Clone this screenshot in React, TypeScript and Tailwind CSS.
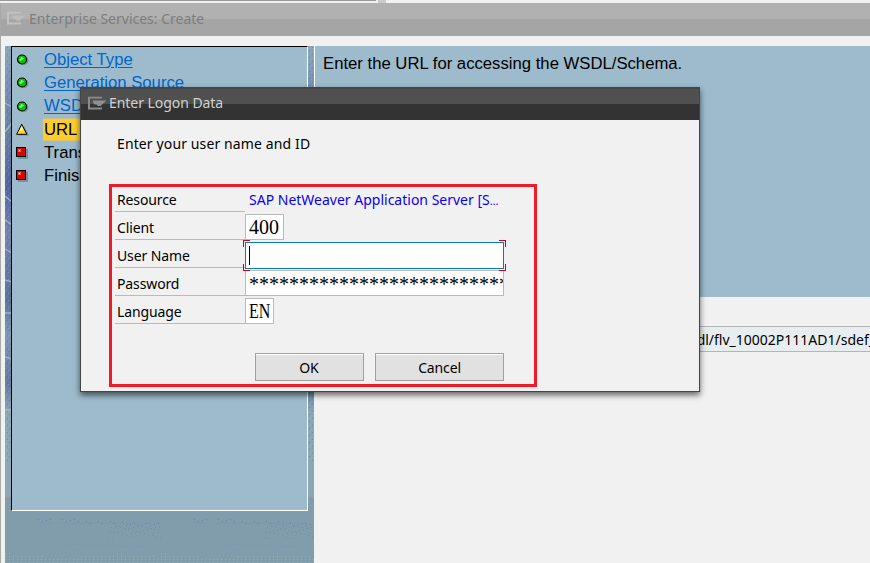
import React from 'react';

const ui = "font-['Noto_Sans',sans-serif]";
const arial = "font-['Liberation_Sans',Arial,sans-serif]";

function WindowGlyph({ stroke, fill }: { stroke: string; fill: string }) {
  return (
    <svg width="20" height="14" viewBox="0 0 20 14" className="shrink-0 -translate-y-[1.5px]">
      <path d="M14 1H1V12H14" fill="none" stroke={stroke} strokeWidth="2" />
      <path d="M5 4H18.5L12.5 9.5H10L8.5 8H6.5L5 6Z" fill={fill} />
    </svg>
  );
}

type StepState = 'done' | 'current' | 'todo';

function StepIcon({ state }: { state: StepState }) {
  return (
    <svg width="13" height="13" viewBox="0 0 13 13" className="shrink-0">
      {state === 'done' && (
        <>
          <circle cx="7.8" cy="7.5" r="4.7" fill="#6f93a5" />
          <circle cx="6" cy="6.5" r="4.5" fill="#00c800" stroke="#000" strokeWidth="1.2" />
          <path d="M3 7L6 4L8 5.5L4.5 8Z" fill="#8bff7a" />
          <path d="M5 4.5h1v1h-1z" fill="#fff" />
        </>
      )}
      {state === 'current' && (
        <>
          <path d="M8 3L13 12.5H3Z" fill="#6f93a5" />
          <path d="M5.7 1.2L10.8 11.3H0.6Z" fill="#ffd52c" stroke="#000" strokeWidth="1" />
          <path d="M5.5 3.5L7.5 7.5H3.7Z" fill="#fff8b0" />
        </>
      )}
      {state === 'todo' && (
        <g shapeRendering="crispEdges">
          <path d="M2 3H12V13H2Z" fill="#6f93a5" />
          <path d="M0 1H10V11H0Z" fill="#000" />
          <path d="M1 2H9V10H1Z" fill="#e00000" />
          <path d="M2 3H5V6H2Z" fill="#ff6060" />
          <path d="M3 4H4V5H3Z" fill="#fff" />
        </g>
      )}
    </svg>
  );
}

const steps: { label: string; state: StepState }[] = [
  { label: 'Object Type', state: 'done' },
  { label: 'Generation Source', state: 'done' },
  { label: 'WSDL', state: 'done' },
  { label: 'URL', state: 'current' },
  { label: 'Transport', state: 'todo' },
  { label: 'Finish', state: 'todo' },
];

function Steps() {
  return (
    <ul className="flex flex-col pt-[1px]">
      {steps.map((s) => (
        <li key={s.label} className="flex h-[23.25px] items-center pl-[4px]">
          <StepIcon state={s.state} />
          <span
            className={`ml-[14px] pl-[1px] pr-[3px] text-[16.7px] leading-[22px] whitespace-nowrap ${
              s.state === 'done'
                ? 'text-[#0066cc] underline decoration-1 underline-offset-2'
                : s.state === 'current'
                  ? 'translate-y-[0.6px] bg-[#ffcb2f] text-black'
                  : 'text-black'
            }`}
          >
            {s.label}
          </span>
        </li>
      ))}
    </ul>
  );
}

function WaterTexture() {
  const dots: React.ReactElement[] = [];
  for (let i = 0; i < 62; i++) {
    const x = 33 + i * 2;
    if (i > 7 && i < 11) continue;
    if (i % 2 === 0) {
      dots.push(<rect key={`a${i}`} x={x} y={473 + (i % 3) + Math.floor(i / 22) * 2} width="1" height="1" fill="#6b80ac" />);
    }
    dots.push(<rect key={`g${i}`} x={x} y={476 + (i % 2)} width="1" height="1" fill="#7693a9" />);
    if (i > 34) {
      dots.push(<rect key={`b${i}`} x={x} y={480 + ((i * 7) % 13)} width="1" height="1" fill="#7490a6" />);
      dots.push(<rect key={`c${i}`} x={x + 1} y={477 + ((i * 5) % 11)} width="1" height="1" fill="#7391a0" />);
    }
  }
  for (let i = 0; i < 39; i++) {
    const top = Math.round(4 * Math.abs(Math.sin(i / 9)));
    for (let y = 507; y < 517; y += 3) {
      if (y - 507 >= top) dots.push(<rect key={`d${i}-${y}`} x={i * 4} y={y} width="1" height="1" fill="#91afb9" />);
    }
    dots.push(<rect key={`e${i}`} x={i * 4 + 2} y={508 + ((i * 3) % 5)} width="1" height="1" fill="#8c9fbd" />);
    if (i > 12) dots.push(<rect key={`f${i}`} x={i * 3 + 23} y={497 + Math.floor(i / 10)} width="1" height="1" fill="#7894b3" />);
  }
  return (
    <svg width="309" height="517" className="absolute inset-0">
      <defs>
        <linearGradient id="water" x1="0" y1="0" x2="0" y2="1">
          <stop offset="0" stopColor="#88a9b7" />
          <stop offset="0.08" stopColor="#7590b4" />
          <stop offset="0.16" stopColor="#66869f" />
          <stop offset="0.27" stopColor="#5065a0" />
          <stop offset="0.36" stopColor="#7184ad" />
          <stop offset="0.49" stopColor="#56749a" />
          <stop offset="0.56" stopColor="#7b98b4" />
          <stop offset="0.65" stopColor="#64799c" />
          <stop offset="0.71" stopColor="#88a7b7" />
          <stop offset="0.82" stopColor="#89a7b5" />
          <stop offset="0.87" stopColor="#8ca7b5" />
          <stop offset="0.875" stopColor="#819dac" />
          <stop offset="1" stopColor="#819dac" />
        </linearGradient>
        <pattern id="swell" width="156" height="517" patternUnits="userSpaceOnUse">
          {dots}
        </pattern>
        <pattern id="grain" width="5" height="7" patternUnits="userSpaceOnUse">
          <path d="M0 0h1v1H0zM3 2h1v1H3zM1 5h1v1H1z" fill="#a8bac8" opacity=".35" />
          <path d="M2 1h1v1H2zM4 4h1v1H4z" fill="#3e608d" opacity=".35" />
        </pattern>
      </defs>
      <rect width="309" height="517" fill="url(#water)" />
      <rect width="309" height="415" fill="url(#grain)" />
      <g stroke="#b4c2d2" strokeWidth="1.4" opacity=".75">
        <path d="M0 57L7 61M0 86L7 77M0 150L7 156M0 174L7 179M0 203L7 207M0 234L7 236M0 267H7M0 311L7 313M0 364H7" />
      </g>
      <rect width="309" height="517" fill="url(#swell)" />
    </svg>
  );
}

function Row({ label, children }: { label: string; children: React.ReactNode }) {
  return (
    <div className="flex h-[28px] items-end">
      <div className="flex h-[28px] w-[130px] items-center border-b border-[#bababa] pl-[2px]">
        <span className="translate-y-[2px] text-[14px] tracking-[-0.12px]">{label}</span>
      </div>
      {children}
    </div>
  );
}

const fieldCls =
  "flex h-[26px] items-center overflow-hidden border border-[#bababa] bg-white pl-[3px] font-['Liberation_Serif',serif] text-[20px]";

function LogonDialog() {
  return (
    <section
      className={`absolute left-[80px] top-[87px] flex h-[305px] w-[620px] flex-col border border-[#444] bg-[#f1f1f1] text-black shadow-[0_3px_6px_rgba(0,0,0,0.6)] ${ui}`}
    >
      <header className="flex h-[32px] shrink-0 items-center border-t border-[#444] bg-linear-to-b from-[#505050] from-[15px] to-[#333] to-[15px] pl-[7px] text-[#d0d0d0]">
        <WindowGlyph stroke="#8b8b8b" fill="#909090" />
        <span className="ml-[1px] -translate-y-[2px] text-[14px] tracking-[-0.05px]">Enter Logon Data</span>
      </header>
      <p className="mt-[14px] pl-[36px] text-[14px] leading-[20px] tracking-[0.12px]">Enter your user name and ID</p>
      <div className="ml-[28px] mt-[30px] flex h-[203px] w-[428px] shrink-0 flex-col border-3 border-[#ee1c25] pl-[3px]">
        <div className="-mt-[3px]">
          <Row label="Resource">
            <span className="translate-y-[1px] self-center pl-[4px] text-[14px] text-[#0b00f0]">
              SAP NetWeaver Application Server [S<span className="text-[11px]">…</span>
            </span>
          </Row>
          <Row label="Client">
            <div className={`${fieldCls} w-[39px]`}>400</div>
          </Row>
          <Row label="User Name">
            <div className="relative -mb-px flex h-[27px] w-[259px] items-center border border-[#0879bb] bg-white pl-[3px]">
              <span className="h-[19px] w-px bg-black" />
              <i className="absolute -left-[3px] -top-[3px] h-[7px] w-[7px] border-l border-t border-[#d00010]" />
              <i className="absolute -right-[3px] -top-[3px] h-[7px] w-[7px] border-r border-t border-[#d00010]" />
              <i className="absolute -bottom-[3px] -left-[3px] h-[7px] w-[7px] border-b border-l border-[#d00010]" />
              <i className="absolute -bottom-[3px] -right-[3px] h-[7px] w-[7px] border-b border-r border-[#d00010]" />
            </div>
          </Row>
          <Row label="Password">
            <div className={`${fieldCls} w-[259px]`}>
              <span className="translate-y-[1px]">**************************</span>
            </div>
          </Row>
          <Row label="Language">
            <div className={`${fieldCls} w-[29px]`}>
              <span className="origin-left scale-x-[0.8]">EN</span>
            </div>
          </Row>
        </div>
        <div className="ml-[140px] mt-[29px] flex gap-[11px]">
          <button className="h-[28px] w-[109px] border border-[#a0a0a0] bg-[#e1e1e1] pr-[1px] text-[14px] shadow-[inset_0_1px_#fff]">OK</button>
          <button className="h-[28px] w-[129px] border border-[#a0a0a0] bg-[#e1e1e1] text-[14px] tracking-[-0.15px] shadow-[inset_0_1px_#fff]">
            Cancel
          </button>
        </div>
      </div>
    </section>
  );
}

export default function App() {
  return (
    <div className={`relative flex h-[563px] w-[870px] flex-col overflow-hidden bg-[#f1f1f1] ${arial}`}>
      <div className="flex h-[3px] shrink-0">
        <div className="h-px w-[376px] bg-[#999]" />
        <div className="ml-[2px] h-[3px] w-[8px] bg-[#ccc]" />
      </div>
      <div className="flex min-h-0 flex-1 flex-col border-l border-[#a8a8a8]">
        <header className={`flex h-[33px] shrink-0 items-center bg-linear-to-b from-[#b1b1b1] from-[16px] to-[#a5a5a5] to-[16px] pl-[6px] text-[#7d7d7d] ${ui}`}>
          <WindowGlyph stroke="#c2c2c2" fill="#bcbcbc" />
          <span className="ml-[2px] -translate-y-px text-[14px]">Enterprise Services: Create</span>
        </header>
        <main className="flex min-h-0 flex-1 pl-[4px] pt-[10px]">
          <aside className="relative h-full w-[309px] shrink-0">
            <WaterTexture />
            <div className="relative ml-[6px] h-[465px] w-[297px] border border-b-white border-l-black border-r-white border-t-black bg-[#9dbbcc]">
              <Steps />
            </div>
          </aside>
          <div className="flex min-w-0 flex-1 flex-col">
            <div className="h-[251px] border-l border-white bg-[#9dbbcc] pl-[8px] pt-[8px]">
              <p className="text-[16.7px] leading-[20px] text-black">Enter the URL for accessing the WSDL/Schema.</p>
            </div>
            <div className={`mt-[29px] flex h-[26px] items-center justify-end overflow-hidden border-y border-[#b5b5b5] bg-[#e8edf0] text-[14px] text-black ${ui}`}>
              <span className="-mr-[5px] whitespace-nowrap">dl/flv_10002P111AD1/sdef_</span>
            </div>
          </div>
        </main>
      </div>
      <LogonDialog />
    </div>
  );
}
